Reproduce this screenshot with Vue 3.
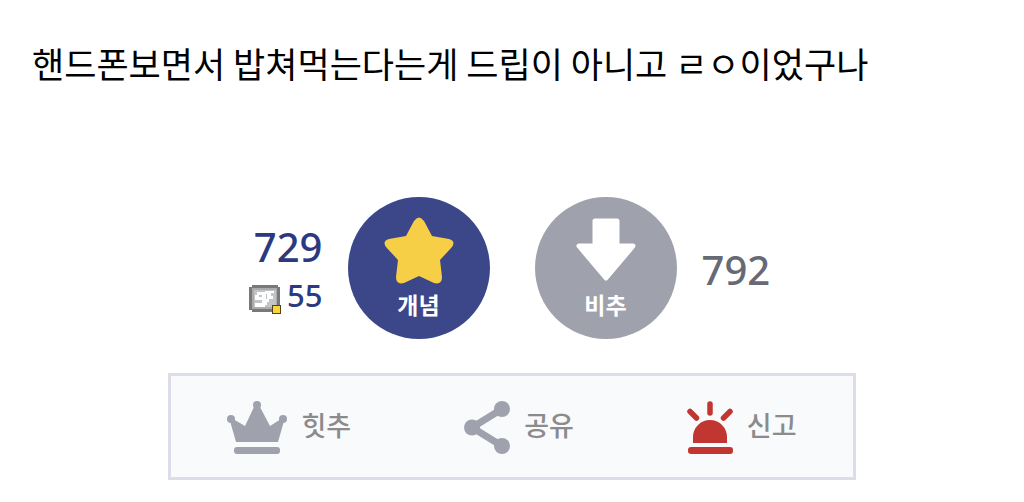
<script setup>
import { ref } from 'vue'

const upVotes = ref(729)
const memberVotes = ref(55)
const downVotes = ref(792)
</script>

<template>
  <main class="post">
    <p class="body-text">핸드폰보면서 밥쳐먹는다는게 드립이 아니고 ㄹㅇ이었구나</p>

    <section class="votes" aria-label="추천">
      <div class="counts">
        <span class="count up">{{ upVotes }}</span>
        <span class="member">
          <svg class="badge" viewBox="0 0 32 30" width="32" height="30" aria-hidden="true">
            <path d="M3 0H29V2H31V25H29V27H3V25H0V2H3Z" fill="#77797b" />
            <path d="M3 3H28V24H3Z" fill="#a9abad" />
            <path d="M5 5H27V22H5Z" fill="#c3c4c6" />
            <path d="M8 7H16V6H25V8H22V11H24V14H20V17H18V20H16V22H6V18H13V15H6V10H8Z" fill="#fff" />
            <path d="M10 10H13V12H10ZM17 9H18V14H17Z" fill="#c3c4c6" />
            <path d="M23 20H32V29H23Z" fill="#4d4321" />
            <path d="M24 21H31V28H24Z" fill="#f8d638" />
          </svg>
          <span class="member-count">{{ memberVotes }}</span>
        </span>
      </div>

      <div class="vote-buttons">
        <button class="vote recommend" type="button" @click="upVotes++">
          <svg viewBox="0 0 70 68" width="70" height="68" fill="#f6cf46" aria-hidden="true">
            <path
              d="M30 4Q35 -3 40 4L48 19L65 22Q72 24 68 30L56 43L58 60Q58 68 50 66L35 59L20 66Q12 68 12 60L14 43L2 30Q-2 24 5 22L22 19Z"
            />
          </svg>
          <span>개념</span>
        </button>

        <button class="vote against" type="button" @click="downVotes++">
          <svg viewBox="0 0 70 68" width="70" height="68" aria-hidden="true">
            <path
              d="M24 4 H46 V29 H62 L35 61 L8 29 H24 Z"
              fill="#fff" stroke="#fff" stroke-width="5" stroke-linejoin="round"
            />
          </svg>
          <span>비추</span>
        </button>
      </div>

      <span class="count down">{{ downVotes }}</span>
    </section>

    <nav class="actions" aria-label="게시글 메뉴">
      <button class="action" type="button">
        <svg viewBox="0 0 60 53" width="60" height="53" fill="#9fa1ac" aria-hidden="true">
          <circle cx="30" cy="4" r="4" />
          <circle cx="4" cy="18" r="4" />
          <circle cx="56" cy="18" r="4" />
          <path d="M27 6H33L43 25L54 18L57 20L51 41H9L3 20L6 18L18 25Z" />
          <rect x="7" y="46" width="46" height="7" rx="3" />
        </svg>
        <span>힛추</span>
      </button>
      <button class="action" type="button">
        <svg viewBox="0 0 46 53" width="46" height="53" fill="#9fa1ac" aria-hidden="true">
          <path d="M38 8L8 26.5L38 45" fill="none" stroke="#9fa1ac" stroke-width="7" />
          <circle cx="38" cy="8" r="8" />
          <circle cx="8" cy="26.5" r="8" />
          <circle cx="38" cy="45" r="8" />
        </svg>
        <span>공유</span>
      </button>
      <button class="action" type="button">
        <svg viewBox="0 0 46 53" width="46" height="53" fill="#c23631" aria-hidden="true">
          <path d="M6 42V36a17 17 0 0 1 34 0V42Z" />
          <rect x="1" y="46" width="45" height="7" rx="3" />
          <path d="M23 3V12M3 10.500L9.500 17M43 10.500L36.500 17" fill="none" stroke="#c23631" stroke-width="5.500" stroke-linecap="round" />
        </svg>
        <span>신고</span>
      </button>
    </nav>
  </main>
</template>

<style>
body {
  margin: 0;
  background: #fff;
}
</style>

<style scoped>
.post {
  padding: 38px 32px 22px;
  font-family: "Noto Sans CJK KR", "Noto Sans", sans-serif;
  color: #000;
}

.body-text {
  margin: 0;
  font-size: 35px;
  line-height: 50px;
}

.votes {
  display: grid;
  grid-template-columns: 1fr auto 1fr;
  align-items: center;
  column-gap: 25px;
  margin-top: 109px;
}

.counts {
  display: flex;
  flex-direction: column;
  align-items: flex-end;
}

.count,
.member-count {
  font-family: "Noto Sans", sans-serif;
  font-weight: 500;
}

.count {
  font-size: 40px;
  line-height: 54px;
}

.up,
.member-count {
  color: #2b3a80;
}

.down {
  padding-top: 4px;
  color: #666a75;
}

.member {
  display: flex;
  align-items: center;
  gap: 6px;
}

.badge {
  margin-top: 10px;
}

.member-count {
  font-size: 31px;
  line-height: 42px;
}

button {
  border: 0;
  margin: 0;
  font-family: inherit;
  cursor: pointer;
}

.vote-buttons {
  display: flex;
  gap: 45px;
}

.vote {
  display: flex;
  flex-direction: column;
  align-items: center;
  width: 142px;
  height: 142px;
  padding: 20px 0 0;
  border-radius: 50%;
  color: #fff;
  font-size: 23px;
  font-weight: 700;
  line-height: 38px;
}

.recommend {
  background: #3c478a;
}

.against {
  background: #9fa1ac;
}

.actions {
  display: flex;
  justify-content: space-around;
  align-items: center;
  box-sizing: border-box;
  max-width: 688px;
  margin: 34px auto 0;
  padding: 23px 0;
  border: 3px solid #dddde9;
  background: #f9fafc;
}

.action {
  display: flex;
  align-items: center;
  gap: 14px;
  padding: 0;
  background: none;
  color: #8b8b8b;
  font-size: 27px;
  font-weight: 500;
  line-height: 40px;
}

.action svg {
  margin-top: 2px;
}

.action span {
  padding-bottom: 4px;
}
</style>
